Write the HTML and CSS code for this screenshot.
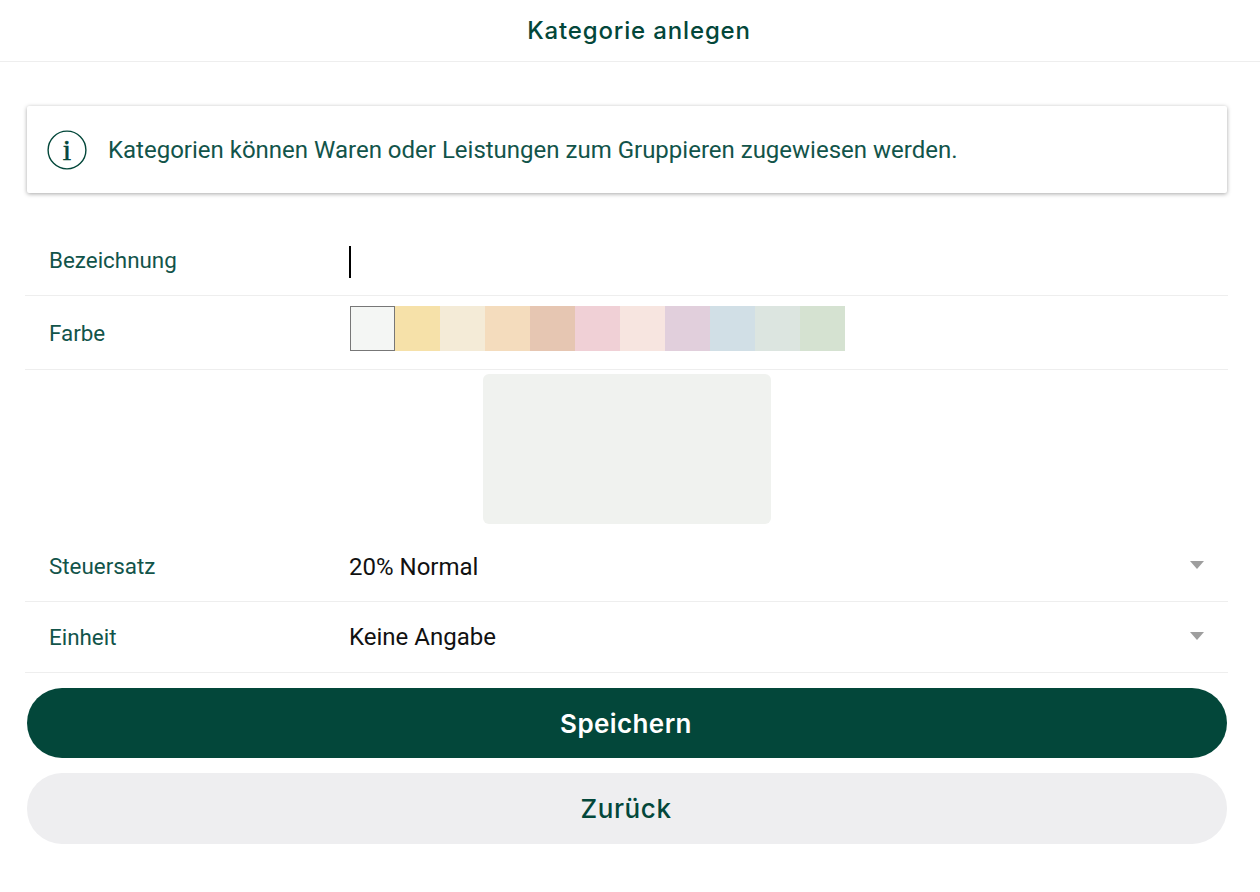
FILE: index.html
```html
<!DOCTYPE html>
<html>
<head>
    <title>Kategorie anlegen</title>
    <link rel="stylesheet" href="styles.css">
</head>
<body>
<header class="title-bar">Kategorie anlegen</header>

<main class="content">
    <div class="info-card">
        <svg class="info-icon" width="40" height="40" viewBox="0 0 40 40">
            <circle cx="20" cy="20" r="18.9" fill="none" stroke="#03473a" stroke-width="1.4"/>
        </svg>
        <span class="info-letter">i</span>
        <span class="info-text">Kategorien können Waren oder Leistungen zum Gruppieren zugewiesen werden.</span>
    </div>

    <form class="form">
        <div class="form-row row-name">
            <label class="row-label">Bezeichnung</label>
            <div class="caret"></div>
        </div>
        <div class="form-row row-color">
            <label class="row-label">Farbe</label>
            <div class="swatches">
                <div class="swatch swatch-active"></div>
                <div class="swatch swatch-2"></div>
                <div class="swatch swatch-3"></div>
                <div class="swatch swatch-4"></div>
                <div class="swatch swatch-5"></div>
                <div class="swatch swatch-6"></div>
                <div class="swatch swatch-7"></div>
                <div class="swatch swatch-8"></div>
                <div class="swatch swatch-9"></div>
                <div class="swatch swatch-10"></div>
                <div class="swatch swatch-11"></div>
            </div>
        </div>
        <div class="preview"></div>
        <div class="form-row row-select row-tax">
            <label class="row-label">Steuersatz</label>
            <div class="select-value">20% Normal</div>
            <div class="arrow"></div>
        </div>
        <div class="form-row row-select">
            <label class="row-label">Einheit</label>
            <div class="select-value">Keine Angabe</div>
            <div class="arrow"></div>
        </div>
        <button type="button" class="btn btn-save">Speichern</button>
        <button type="button" class="btn btn-back">Zurück</button>
    </form>
</main>
</body>
</html>
```

FILE: styles.css
```css
body {
    margin: 0;
    font-family: Roboto, "Liberation Sans", sans-serif;
    background-color: #fff;
    color: #03473a;
}
.title-bar {
    height: 61px;
    padding-left: 18px;
    line-height: 61px;
    text-align: center;
    font-family: Inter, sans-serif;
    font-size: 24px;
    font-weight: 500;
    letter-spacing: 0.85px;
    border-bottom: 1px solid #eeeeee;
    box-sizing: content-box;
}
.content {
    padding: 44px 32px 0 25px;
}
.info-card {
    position: relative;
    display: flex;
    align-items: center;
    height: 87px;
    margin: 0 1px 0 2px;
    padding-left: 20px;
    background-color: #fff;
    border-radius: 2px;
    box-shadow: 0 1px 4px rgba(0, 0, 0, 0.35);
}
.info-icon {
    flex: none;
    margin-right: 21px;
}
.info-letter {
    position: absolute;
    left: 20px;
    width: 40px;
    text-align: center;
    font-family: "Liberation Serif", serif;
    font-size: 30px;
    font-weight: 400;
    -webkit-text-stroke: 0.5px #03473a;
}
.info-text {
    font-size: 24px;
    color: #12544a;
}
.form {
    margin-top: 33px;
}
.form-row {
    display: flex;
    align-items: center;
    border-bottom: 1px solid #eeeeee;
    box-sizing: border-box;
}
.row-name {
    height: 70px;
}
.row-name .row-label {
    padding-bottom: 2px;
}
.row-color {
    height: 74px;
    align-items: flex-start;
}
.row-select {
    height: 71px;
    position: relative;
}
.row-label {
    flex: none;
    width: 300px;
    padding-left: 24px;
    font-size: 22.4px;
    color: #12544a;
}
.row-color .row-label {
    padding-top: 24px;
}
.row-tax .select-value {
    padding-top: 2px;
}
.caret {
    width: 2px;
    height: 32px;
    margin-top: 2px;
    background-color: #000;
}
.swatches {
    display: flex;
    margin-top: 10px;
    margin-left: 1px;
}
.swatch {
    width: 45px;
    height: 45px;
    box-sizing: border-box;
}
.swatch-active {
    background-color: #f4f6f4;
    border: 1px solid #777;
}
.swatch-2 { background-color: #f6e1a9; }
.swatch-3 { background-color: #f4ebd7; }
.swatch-4 { background-color: #f4dcbd; }
.swatch-5 { background-color: #e6c6b2; }
.swatch-6 { background-color: #f0d0d6; }
.swatch-7 { background-color: #f7e5e0; }
.swatch-8 { background-color: #e1cfdc; }
.swatch-9 { background-color: #d1dfe6; }
.swatch-10 { background-color: #dce5e0; }
.swatch-11 { background-color: #d5e2d1; }
.preview {
    width: 288px;
    height: 150px;
    margin: 4px 0 7px 458px;
    background-color: #f0f2ef;
    border-radius: 6px;
}
.select-value {
    flex: 1;
    font-size: 24px;
    color: #111;
}
.arrow {
    flex: none;
    width: 0;
    height: 0;
    margin-right: 24px;
    margin-bottom: 3px;
    border-left: 7px solid transparent;
    border-right: 7px solid transparent;
    border-top: 8px solid #9e9e9e;
}
.btn {
    display: block;
    width: 1200px;
    height: 70px;
    margin-left: 2px;
    padding: 0 2px 0 0;
    border: none;
    border-radius: 35px;
    font-family: Inter, sans-serif;
    font-size: 26px;
    letter-spacing: 0.4px;
    cursor: pointer;
}
.btn-save {
    margin-top: 15px;
    font-weight: 600;
    background-color: #03473a;
    color: #fff;
}
.btn-back {
    margin-top: 15px;
    height: 71px;
    font-weight: 500;
    letter-spacing: 0.6px;
    background-color: #eeeef0;
    color: #03473a;
}
```
